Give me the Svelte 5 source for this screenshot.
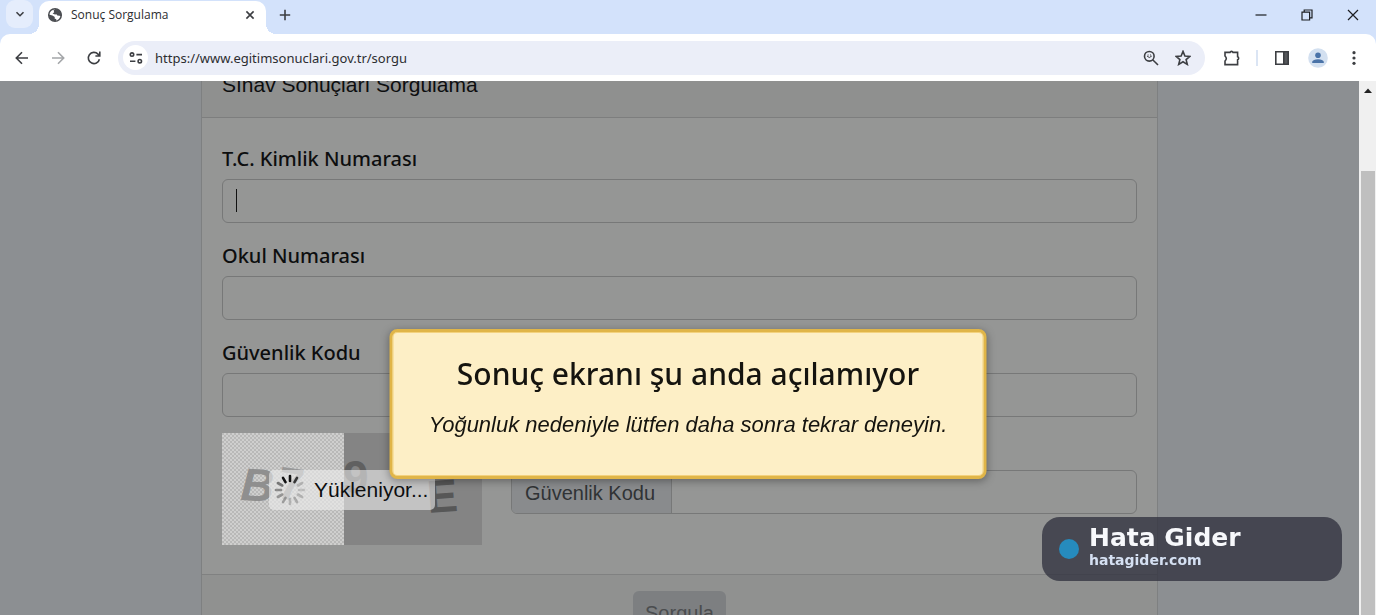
<script lang="ts">
  let url = $state("https://www.egitimsonuclari.gov.tr/sorgu");
  let kimlikNo = $state("");
  let okulNo = $state("");
  let kod = $state("");
  let kodTekrar = $state("");

  // spinner blades, darkest ones at the top
  const blades = [1, 0.8, 0.2, 0.15, 0.2, 0.25, 0.2, 0.3, 0.35, 0.4, 0.5, 1];
</script>

<div class="browser">
  <header class="tabstrip">
    <button class="tab-search" aria-label="Sekmelerde ara">
      <svg width="10" height="10" viewBox="0 0 10 10"><path d="M1.5 3.2 5 6.7 8.5 3.2" /></svg>
    </button>
    <div class="tab">
      <svg class="globe" width="16" height="16" viewBox="0 0 16 16">
        <circle cx="8" cy="8" r="6.3" />
        <path class="land" d="M8.5 1.8 6.6 3.6 7.2 5.2 5.6 6.6 8 7.6 9.4 7.2 10.4 8.6 12.6 8.8 14 9.4 14.4 6.4 12.6 3.2Z" />
        <path class="land" d="M1.8 7.4 5.4 8.4 7.8 10 7.6 11.6 9.4 12.2 8.8 14.2 5 13.8 2.4 11Z" />
      </svg>
      <span class="tab-title">Sonuç Sorgulama</span>
      <button class="icon-btn tab-close" aria-label="Sekmeyi kapat">
        <svg width="10" height="10" viewBox="0 0 10 10"><path d="M1.4 1.4 8.6 8.6M8.6 1.4 1.4 8.6" /></svg>
      </button>
    </div>
    <button class="icon-btn new-tab" aria-label="Yeni sekme">
      <svg width="12" height="12" viewBox="0 0 12 12"><path d="M6 .8V11.2M.8 6H11.2" /></svg>
    </button>
    <div class="window-controls">
      <button class="icon-btn" aria-label="Küçült">
        <svg width="12" height="12" viewBox="0 0 12 12"><path d="M.5 6H11.5" /></svg>
      </button>
      <button class="icon-btn" aria-label="Geri yükle">
        <svg width="12" height="12" viewBox="0 0 12 12"><path d="M1 3.2H8.6V11H1ZM3.2 3V1H11V8.8H8.8" /></svg>
      </button>
      <button class="icon-btn" aria-label="Kapat">
        <svg width="12" height="12" viewBox="0 0 12 12"><path d="M1 1 11 11M11 1 1 11" /></svg>
      </button>
    </div>
  </header>

  <nav class="toolbar">
    <button class="icon-btn" aria-label="Geri">
      <svg width="16" height="16" viewBox="0 0 16 16"><path d="M14 8H2.5M8 2.3 2.3 8 8 13.7" /></svg>
    </button>
    <button class="icon-btn disabled" aria-label="İleri">
      <svg width="16" height="16" viewBox="0 0 16 16"><path d="M2 8H13.5M8 2.3 13.7 8 8 13.7" /></svg>
    </button>
    <button class="icon-btn" aria-label="Yenile">
      <svg width="16" height="16" viewBox="0 0 16 16"><path d="M13.4 9.2A5.6 5.6 0 1 1 12 4.1L13.6 5.8M13.8 1.6V6H9.4" /></svg>
    </button>
    <div class="omnibox">
      <button class="icon-btn site-info" aria-label="Site bilgileri">
        <svg width="14" height="12" viewBox="0 0 14 12">
          <circle cx="3" cy="2.6" r="1.7" /><path d="M7.4 2.6H13M1 9.2H6.4" /><circle cx="10.8" cy="9.2" r="1.7" />
        </svg>
      </button>
      <input class="url" type="text" aria-label="Adres" bind:value={url} />
      <button class="icon-btn" aria-label="Yakınlaştır">
        <svg width="16" height="16" viewBox="0 0 16 16"><circle cx="6.3" cy="6.3" r="4.8" /><path d="M9.7 9.7 15 15" /><path class="thin" d="M4 6Q6.3 9 8.8 6M4.6 5H5.6M7 5H8" /></svg>
      </button>
      <button class="icon-btn" aria-label="Yer işareti ekle">
        <svg width="16" height="16" viewBox="0 0 16 16"><path d="M8 1.4 9.9 6 14.9 6.4 11.1 9.6 12.3 14.4 8 11.8 3.7 14.4 4.9 9.6 1.1 6.4 6.1 6Z" /></svg>
      </button>
    </div>
    <div class="actions">
      <button class="icon-btn" aria-label="Uzantılar">
        <svg width="18" height="18" viewBox="0 0 18 18"><path d="M2 3.4H7A1.6 1.6 0 0 1 10 3.4H14.6V7.8A1.6 1.6 0 0 1 14.6 10.8V15.6H2V12Q4.6 9.6 2 7Z" /></svg>
      </button>
      <span class="divider"></span>
      <button class="icon-btn" aria-label="Yan panel">
        <svg width="16" height="16" viewBox="0 0 16 16"><path d="M1.8 1.8H14.2V14.2H1.8Z" /><path class="solid" d="M9.8 1.8H14.2V14.2H9.8Z" /></svg>
      </button>
      <button class="icon-btn" aria-label="Profil">
        <svg class="avatar" width="20" height="20" viewBox="0 0 20 20"><circle class="back" cx="10" cy="10" r="9.8" /><circle cx="10" cy="7.2" r="2.8" /><path d="M4.2 15V13.8Q5 11.2 10 11.2T15.8 13.8V15Z" /></svg>
      </button>
      <button class="icon-btn" aria-label="Menü">
        <svg class="dots" width="16" height="16" viewBox="0 0 16 16"><circle cx="8" cy="2.7" r="1.6" /><circle cx="8" cy="8" r="1.6" /><circle cx="8" cy="13.3" r="1.6" /></svg>
      </button>
    </div>
  </nav>

  <div class="viewport">
    <main class="page">
      <form class="card" onsubmit={(e) => e.preventDefault()}>
        <div class="card-header">Sınav Sonuçları Sorgulama</div>
        <div class="card-body">
          <div class="field">
            <label for="kimlik">T.C. Kimlik Numarası</label>
            <div class="control">
              <input id="kimlik" type="text" bind:value={kimlikNo} />
              <span class="caret"></span>
            </div>
          </div>
          <div class="field">
            <label for="okul">Okul Numarası</label>
            <input id="okul" type="text" bind:value={okulNo} />
          </div>
          <div class="field">
            <label for="kod">Güvenlik Kodu</label>
            <input id="kod" type="text" bind:value={kod} />
          </div>
          <div class="captcha-row">
            <div class="captcha">
              <svg width="260" height="112" viewBox="0 0 260 112">
                <defs>
                  <pattern id="mesh" width="4" height="4" patternUnits="userSpaceOnUse">
                    <rect width="4" height="4" fill="#cfcfce" />
                    <rect width="2" height="2" fill="#b9b9b8" />
                    <rect x="2" y="2" width="2" height="2" fill="#b9b9b8" />
                  </pattern>
                </defs>
                <rect width="260" height="112" fill="#848484" />
                <rect width="122" height="112" fill="url(#mesh)" />
                <g class="letters">
                  <text x="18" y="67" fill="#8f8f8f" transform="rotate(3 18 67)" font-style="italic">B</text>
                  <text x="54" y="65" fill="#989898" transform="rotate(8 54 65)">7</text>
                  <text x="121" y="60" fill="#606060">9</text>
                  <text x="206" y="80" fill="#575757" transform="rotate(-4 206 80)">E</text>
                </g>
              </svg>
              <div class="loading" role="status">
                <svg width="32" height="32" viewBox="-16 -16 32 32">
                  {#each blades as opacity, i}
                    <path d="M0 -9V-14" {opacity} transform="rotate({i * 30})" />
                  {/each}
                </svg>
                <span>Yükleniyor...</span>
              </div>
            </div>
            <div class="input-group">
              <label for="kod-tekrar">Güvenlik Kodu</label>
              <input id="kod-tekrar" type="text" bind:value={kodTekrar} />
            </div>
          </div>
        </div>
        <div class="card-footer">
          <button class="submit" type="submit">Sorgula</button>
        </div>
      </form>
    </main>
    <div class="scrollbar">
      <svg width="8" height="5" viewBox="0 0 8 5"><path d="M0 5 4 .5 8 5Z" /></svg>
      <div class="thumb"></div>
    </div>
  </div>
</div>

<div class="alert" role="alertdialog" aria-labelledby="alert-title">
  <h2 id="alert-title">Sonuç ekranı şu anda açılamıyor</h2>
  <p>Yoğunluk nedeniyle lütfen daha sonra tekrar deneyin.</p>
</div>

<div class="brand">
  <span class="brand-dot"></span>
  <div>
    <strong>Hata Gider</strong>
    <small>hatagider.com</small>
  </div>
</div>

<style>
  :global(body) {
    margin: 0;
    overflow: hidden;
    background: #fff;
  }

  .browser {
    display: flex;
    flex-direction: column;
    height: 100vh;
    background: #d3e2fb;
    font-family: "Noto Sans", "Open Sans", sans-serif;
    color: #2c2d31;
  }

  button,
  input {
    font: inherit;
    color: inherit;
    box-sizing: border-box;
  }

  .icon-btn {
    display: grid;
    place-items: center;
    width: 32px;
    height: 32px;
    padding: 0;
    border: 0;
    border-radius: 50%;
    background: none;
  }

  .icon-btn svg,
  .tab-search svg {
    fill: none;
    stroke: #3c3e42;
    stroke-width: 1.6;
  }

  /* tab strip */
  .tabstrip {
    display: flex;
    align-items: center;
    height: 34px;
    padding-left: 6px;
  }

  .tab-search {
    display: grid;
    place-items: center;
    width: 27px;
    height: 28px;
    margin: 0 6px 6px 0;
    padding: 0;
    border: 0;
    border-radius: 9px;
    background: #e5edfc;
  }

  .tab {
    position: relative;
    display: flex;
    align-items: center;
    gap: 8px;
    width: 227px;
    height: 33px;
    margin-top: 1px;
    padding: 0 0 6px 8px;
    box-sizing: border-box;
    border-radius: 10px 10px 0 0;
    background: #fff;
  }

  /* flared feet where the tab meets the toolbar */
  .tab::before,
  .tab::after {
    content: "";
    position: absolute;
    bottom: 0;
    width: 10px;
    height: 10px;
  }

  .tab::before {
    right: 100%;
    background: radial-gradient(circle at 0 0, transparent 10px, #fff 10px);
  }

  .tab::after {
    left: 100%;
    background: radial-gradient(circle at 100% 0, transparent 10px, #fff 10px);
  }

  .globe {
    fill: none;
    stroke: #4c4e52;
    stroke-width: 1.5;
  }

  .globe .land {
    fill: #4c4e52;
    stroke: none;
  }

  .tab-title {
    flex: 1;
    font-family: "Open Sans", "Noto Sans", sans-serif;
    font-size: 12px;
    line-height: 16px;
  }

  .new-tab {
    margin: 0 0 4px 3px;
  }

  .window-controls {
    display: flex;
    gap: 14px;
    margin: 0 7px 4px auto;
  }

  .window-controls svg {
    stroke: #1c1e22;
    stroke-width: 1.2;
  }

  /* toolbar */
  .toolbar {
    display: flex;
    align-items: center;
    gap: 4px;
    height: 47px;
    padding: 0 6px;
    border-radius: 10px 10px 0 0;
    background: #fff;
  }

  .disabled svg {
    stroke: #a4a6a9;
  }

  .omnibox {
    display: flex;
    flex: 1;
    align-items: center;
    height: 34px;
    margin-left: 4px;
    padding: 0 6px 0 5px;
    border-radius: 17px;
    background: #ebeef8;
  }

  .site-info {
    width: 25px;
    height: 25px;
    background: #fff;
  }

  .url {
    flex: 1;
    min-width: 0;
    padding: 0 7px;
    border: 0;
    outline: 0;
    background: none;
    font-size: 13px;
    line-height: 20px;
  }

  .icon-btn .thin {
    stroke-width: 1;
  }

  .icon-btn .solid {
    fill: #55575b;
  }

  .actions {
    display: flex;
    align-items: center;
    gap: 4px;
    margin-left: 7px;
  }

  .divider {
    width: 2px;
    height: 16px;
    margin: 0 4px;
    background: #dbe5f4;
  }

  .icon-btn .avatar {
    fill: #4a73a8;
    stroke: none;
  }

  .avatar .back {
    fill: #d3e0f0;
  }

  .icon-btn .dots {
    fill: #3c3e42;
    stroke: none;
  }

  /* page */
  .viewport {
    display: flex;
    flex: 1;
    min-height: 0;
    overflow: hidden;
  }

  .page {
    flex: 1;
    padding: 0 201px;
    background: #8c8f92;
    overflow: hidden;
  }

  .card {
    margin-top: -20px;
    border: 1px solid #7e8081;
    background: #959695;
    color: #0d0e0f;
  }

  .card-header {
    padding: 7px 20px 16px;
    border-bottom: 1px solid #7d7e7e;
    background: #8f908f;
    font-family: "Liberation Sans", Arial, sans-serif;
    font-size: 21px;
    line-height: 32px;
  }

  .card-body {
    padding: 24px 20px 29px;
  }

  .field {
    display: flex;
    flex-direction: column;
    gap: 4px;
    margin-bottom: 16px;
  }

  .field label {
    font-size: 20px;
    font-weight: 500;
    line-height: 33px;
  }

  .control {
    position: relative;
    display: flex;
  }

  .field input {
    width: 100%;
    height: 44px;
    padding: 0 14px;
    border: 1px solid #777878;
    border-radius: 6px;
    outline: 0;
    background: none;
    font-size: 20px;
  }

  .caret {
    position: absolute;
    top: 10px;
    left: 14px;
    width: 1px;
    height: 23px;
    background: #111;
  }

  .captcha-row {
    display: flex;
    align-items: center;
    gap: 29px;
    font-family: "Liberation Sans", Arial, sans-serif;
  }

  .captcha {
    position: relative;
    display: flex;
  }

  .letters {
    font-family: "Liberation Sans", Arial, sans-serif;
    font-size: 46px;
    font-weight: 700;
  }

  .loading {
    position: absolute;
    top: 37px;
    left: 47px;
    display: flex;
    align-items: center;
    gap: 8px;
    height: 40px;
    padding: 0 7px 0 5px;
    box-sizing: border-box;
    border-radius: 5px;
    background: rgba(236, 236, 236, 0.6);
    font-size: 21px;
    line-height: 40px;
  }

  .loading path {
    stroke: #111;
    stroke-width: 2.6;
    stroke-linecap: round;
  }

  .input-group {
    display: flex;
    flex: 1;
    height: 44px;
    margin-top: 6px;
    box-sizing: border-box;
    border: 1px solid #777878;
    border-radius: 6px;
    overflow: hidden;
  }

  .input-group label {
    padding: 0 16px 0 13px;
    border-right: 1px solid #777878;
    background: #898b8d;
    color: #303335;
    font-size: 20px;
    line-height: 44px;
  }

  .input-group input {
    flex: 1;
    min-width: 0;
    padding: 0 14px;
    border: 0;
    outline: 0;
    background: none;
    font-size: 20px;
  }

  .card-footer {
    display: flex;
    justify-content: center;
    padding: 16px 20px;
    border-top: 1px solid #808181;
    background: #909190;
  }

  .submit {
    height: 44px;
    padding: 0 12px;
    border: 0;
    border-radius: 6px;
    background: #7d7f81;
    color: #4b4d4f;
    font-family: "Liberation Sans", Arial, sans-serif;
    font-size: 20px;
  }

  .scrollbar {
    display: flex;
    flex-direction: column;
    align-items: center;
    width: 17px;
    padding-top: 7px;
    box-sizing: border-box;
    background: #f0f0f0;
  }

  .scrollbar svg {
    flex: none;
    fill: #222;
  }

  .thumb {
    flex: 1;
    width: 14px;
    margin-top: 78px;
    background: #bfbfbf;
  }

  /* dialog on top of the dimmed page */
  .alert {
    position: fixed;
    top: 329px;
    left: 50%;
    width: 597px;
    padding: 20px 20px 36px;
    box-sizing: border-box;
    border: 3px solid #e0b548;
    border-radius: 8px;
    transform: translateX(-50%);
    background: #fdefc6;
    box-shadow: inset 0 0 0 1px #f3d27e, 0 2px 8px rgba(0, 0, 0, 0.35);
    color: #15140f;
    text-align: center;
  }

  .alert h2 {
    margin: 0 0 14px;
    font-family: "Noto Sans", "Open Sans", sans-serif;
    font-size: 30px;
    font-weight: 500;
    line-height: 44px;
  }

  .alert p {
    margin: 0;
    font-family: "Liberation Sans", Arial, sans-serif;
    font-size: 22px;
    font-style: italic;
    line-height: 30px;
  }

  .brand {
    position: fixed;
    right: 34px;
    bottom: 34px;
    display: flex;
    align-items: center;
    gap: 10px;
    width: 300px;
    height: 64px;
    padding-left: 17px;
    box-sizing: border-box;
    border-radius: 18px;
    background: rgba(49, 50, 63, 0.78);
    font-family: "DejaVu Sans", sans-serif;
  }

  .brand-dot {
    width: 20px;
    height: 20px;
    border-radius: 50%;
    background: #268bbd;
  }

  .brand strong,
  .brand small {
    display: block;
    font-weight: 700;
  }

  .brand strong {
    color: #f7f8fb;
    font-size: 25px;
    line-height: 28px;
  }

  .brand small {
    padding-bottom: 6px;
    color: #d5e0f2;
    font-size: 14px;
    line-height: 16px;
  }
</style>
